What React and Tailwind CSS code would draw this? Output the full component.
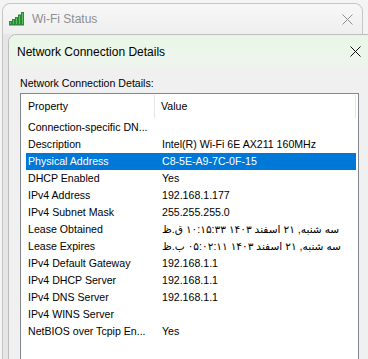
export default function App() {
  const rows = [
    ["Connection-specific DN...", ""],
    ["Description", "Intel(R) Wi-Fi 6E AX211 160MHz"],
    ["Physical Address", "C8-5E-A9-7C-0F-15", true],
    ["DHCP Enabled", "Yes"],
    ["IPv4 Address", "192.168.1.177"],
    ["IPv4 Subnet Mask", "255.255.255.0"],
    ["Lease Obtained", "سه شنبه, ۲۱ اسفند ۱۴۰۳ ۱۰:۱۵:۳۳ ق.ظ"],
    ["Lease Expires", "سه شنبه, ۲۱ اسفند ۱۴۰۳ ۰۵:۰۲:۱۱ ب.ظ"],
    ["IPv4 Default Gateway", "192.168.1.1"],
    ["IPv4 DHCP Server", "192.168.1.1"],
    ["IPv4 DNS Server", "192.168.1.1"],
    ["IPv4 WINS Server", ""],
    ["NetBIOS over Tcpip En...", "Yes"],
  ];
  return (
    <div className="relative w-[368px] h-[359px] overflow-hidden bg-[#f4f4f4] font-['Liberation_Sans','DejaVu_Sans',sans-serif] text-black">
      {/* Outer window */}
      <div className="absolute left-[2px] top-[3px] w-[361px] h-[400px] rounded-t-[8px] border border-[#c6c6c6] bg-[#e6e6e6]">
        <div className="flex h-[30px] items-center rounded-t-[8px] bg-gradient-to-b from-[#f7f7f7] to-[#efefef] pl-[6px] pr-[9px]">
          <svg width="16" height="14" viewBox="0 0 16 14" className="shrink-0">
            <rect x="0.5" y="9.5" width="2" height="3.5" fill="#5cbf5c" stroke="#2b8a36" strokeWidth="1" />
            <rect x="3.5" y="7.5" width="2" height="5.5" fill="#5cbf5c" stroke="#2b8a36" strokeWidth="1" />
            <rect x="6.5" y="5.5" width="2" height="7.5" fill="#5cbf5c" stroke="#2b8a36" strokeWidth="1" />
            <rect x="9.5" y="3" width="2" height="10" fill="#5cbf5c" stroke="#2b8a36" strokeWidth="1" />
            <rect x="12.5" y="0.5" width="2" height="12.5" fill="#5cbf5c" stroke="#2b8a36" strokeWidth="1" />
          </svg>
          <span className="ml-[7px] text-[12px] text-[#8f8f8f]">Wi-Fi Status</span>
          <svg width="11" height="11" viewBox="0 0 11 11" className="ml-auto">
            <path d="M0.5 0.5 L10.5 10.5 M10.5 0.5 L0.5 10.5" stroke="#8e8e8e" strokeWidth="1" />
          </svg>
        </div>
      </div>

      {/* Inner window */}
      <div className="absolute left-[8px] top-[34px] w-[368px] h-[360px] rounded-t-[8px] border border-[#bdbdbd] bg-[#f0f0f0]">
        <div className="flex h-[33px] items-center rounded-t-[8px] bg-gradient-to-b from-[#e9f6e7] via-[#ecf7ea] to-[#eef3ee] pl-[8px]">
          <span className="text-[12px]">Network Connection Details</span>
          <svg width="11" height="11" viewBox="0 0 11 11" className="ml-[185px]">
            <path d="M0.5 0.5 L10.5 10.5 M10.5 0.5 L0.5 10.5" stroke="#111" strokeWidth="1" />
          </svg>
        </div>
        <div className="pl-[11px] pt-[8px]">
          <div className="h-[14px] text-[10.6px] leading-[14px]">Network Connection Details:</div>
          <div className="mt-[3px] h-[300px] w-[339px] border border-[#828790] bg-white text-[10.6px]">
            <div className="flex h-[25px] items-stretch">
              <div className="flex w-[133px] items-center pl-[7px]">Property</div>
              <div className="my-[1px] w-px bg-[#e5e5e5]" />
              <div className="flex w-[200px] items-center pl-[6px]">Value</div>
              <div className="my-[1px] w-px bg-[#e5e5e5]" />
            </div>
            <div className="ml-[5px] w-[330px]">
              {rows.map(([k, v, sel]) => (
                <div
                  key={k}
                  className={
                    sel
                      ? "flex h-[17px] items-center bg-[#0078d7] text-white"
                      : "flex h-[17px] items-center"
                  }
                >
                  <div className="w-[136px] shrink-0 whitespace-nowrap pl-[2px]">{k}</div>
                  <div className="whitespace-nowrap">{v}</div>
                </div>
              ))}
            </div>
          </div>
        </div>
      </div>
    </div>
  );
}
